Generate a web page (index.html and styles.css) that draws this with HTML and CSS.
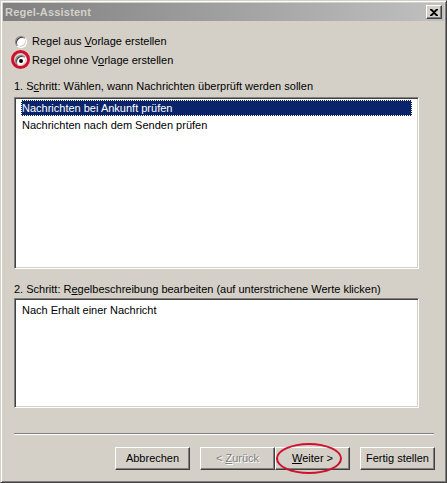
FILE: index.html
```html
<!DOCTYPE html>
<html lang="de">
<head>
<meta charset="utf-8">
<title>Regel-Assistent</title>
<link rel="stylesheet" href="styles.css">
</head>
<body>
<div class="window">
  <div class="titlebar">
    <span class="title">Regel-Assistent</span>
    <span class="close"><svg width="8" height="7" viewBox="0 0 8 7"><path d="M0 0h2l2 2 2-2h2v1L5 3.5 8 6v1H6L4 5 2 7H0V6l3-2.5L0 1z" fill="#000"/></svg></span>
  </div>
  <div class="content">
    <div class="radios">
      <div class="radio"><span class="rb"></span><span>Regel aus <u>V</u>orlage erstellen</span></div>
      <div class="radio"><span class="rb checked"></span><span>Regel ohne V<u>o</u>rlage erstellen</span><span class="ring"></span></div>
    </div>
    <div class="label label1">1. S<u>c</u>hritt: Wählen, wann Nachrichten überprüft werden sollen</div>
    <div class="listbox lb1">
      <div class="item selected">Nachrichten bei Ankunft prüfen</div>
      <div class="item">Nachrichten nach dem Senden prüfen</div>
    </div>
    <div class="label label2">2. Schritt: R<u>e</u>gelbeschreibung bearbeiten (auf unterstrichene Werte klicken)</div>
    <div class="listbox lb2">
      <div class="item plain">Nach Erhalt einer Nachricht</div>
    </div>
    <div class="separator"></div>
    <div class="buttons">
      <span class="btn"><span>Abbrechen</span></span>
      <span class="btn disabled gap"><span>&lt; <u>Z</u>urück</span></span>
      <span class="btn weiter"><span><u>W</u>eiter &gt;</span><span class="ellipse"></span></span>
      <span class="btn gap"><span>Fertig stellen</span></span>
    </div>
  </div>
</div>
</body>
</html>
```
FILE: styles.css
```css
* { box-sizing: border-box; }
html, body { margin: 0; padding: 0; }
body {
  background: #d4d0c8;
  font-family: "Liberation Sans", Arial, sans-serif;
  font-size: 11px;
  line-height: 13px;
  color: #000;
}
u { text-decoration: underline; text-underline-offset: 1px; }
.window {
  width: 447px;
  height: 483px;
  background: #d4d0c8;
  border: 1px solid;
  border-color: #d4d0c8 #404040 #404040 #d4d0c8;
  box-shadow: inset 1px 1px #ffffff, inset -1px -1px #808080;
  padding: 2px;
  display: flex;
  flex-direction: column;
}
.titlebar {
  height: 18px;
  background: linear-gradient(to right, #808080, #c0c0c0);
  display: flex;
  align-items: center;
  justify-content: space-between;
  padding: 0 2px 0 2px;
}
.title {
  color: #d4d0c8;
  font-weight: bold;
  font-size: 11px;
  letter-spacing: 0.2px;
}
.close {
  width: 16px;
  height: 14px;
  background: #d4d0c8;
  border: 1px solid;
  border-color: #ffffff #404040 #404040 #ffffff;
  box-shadow: inset -1px -1px #808080;
  display: flex;
  align-items: center;
  justify-content: center;
  padding-right: 1px;
}
.content {
  flex: 1;
  display: flex;
  flex-direction: column;
  padding: 14px 9px 0 11px;
}
.radios {
  display: flex;
  flex-direction: column;
  gap: 6px;
}
.radio {
  position: relative;
  display: flex;
  align-items: center;
  gap: 5px;
  height: 13px;
  padding-left: 1px;
}
.rb {
  width: 12px;
  height: 12px;
  border-radius: 50%;
  background: #fff;
  border: 1px solid;
  border-color: #808080 #ffffff #ffffff #808080;
  box-shadow: inset 1px 1px #404040, inset -1px -1px #d4d0c8;
  display: flex;
  align-items: center;
  justify-content: center;
}
.rb.checked::after {
  content: "";
  width: 4px;
  height: 4px;
  border-radius: 50%;
  background: #000;
}
.ring {
  position: absolute;
  left: -3px;
  top: -4px;
  width: 19px;
  height: 19px;
  border: 3px solid #d0102c;
  border-radius: 50%;
}
.label1 { margin-top: 13px; }
.label2 { margin-top: 14px; }
.listbox {
  width: 405px;
  background: #fff;
  border: 1px solid;
  border-color: #808080 #ffffff #ffffff #808080;
  box-shadow: inset 1px 1px #404040, inset -1px -1px #d4d0c8;
  padding: 2px 6px 2px 6px;
}
.lb1 { margin-top: 4px; height: 172px; }
.lb2 { margin-top: 2px; height: 110px; padding-top: 3px; }
.item {
  height: 17px;
  line-height: 16px;
  padding-left: 1px;
}
.item.selected {
  background: #0a246a;
  color: #fff;
  outline: 1px dotted #fff;
  outline-offset: -1px;
  height: 16px;
  margin-bottom: 1px;
}
.separator {
  margin-top: 25px;
  width: 420px;
  height: 2px;
  border-top: 1px solid #808080;
  border-bottom: 1px solid #ffffff;
}
.buttons {
  margin-top: 12px;
  display: flex;
  justify-content: flex-end;
}
.btn {
  position: relative;
  width: 75px;
  height: 23px;
  display: flex;
  align-items: center;
  justify-content: center;
  border: 1px solid;
  border-color: #ffffff #404040 #404040 #ffffff;
  box-shadow: inset -1px -1px #808080;
  padding-bottom: 1px;
}
.btn.gap { margin-left: 10px; }
.btn.disabled {
  color: #808080;
  text-shadow: 1px 1px #ffffff;
}
.ellipse {
  position: absolute;
  left: 0px;
  top: -5px;
  width: 66px;
  height: 31px;
  border: 2.5px solid #d0102c;
  border-radius: 50%;
}
```
